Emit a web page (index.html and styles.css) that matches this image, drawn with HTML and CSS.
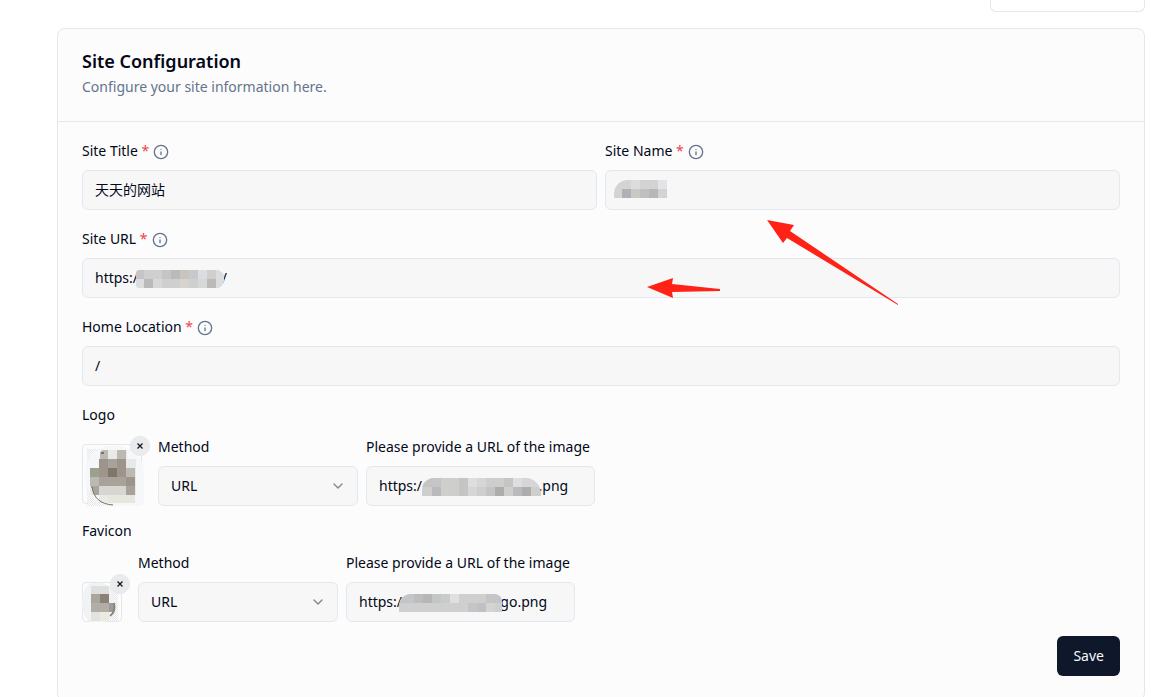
FILE: index.html
```html
<!doctype html>
<html lang="en">
<head>
  <meta charset="utf-8">
  <title>Site Configuration</title>
  <link rel="stylesheet" href="styles.css">
</head>

<body>
  <svg class="sprite" aria-hidden="true">
    <symbol id="info" viewBox="0 0 24 24">
      <circle cx="12" cy="12" r="10"/>
      <path d="M12 16v-4M12 8h.01"/>
    </symbol>
    <symbol id="cross" viewBox="0 0 24 24">
      <path d="M18 6 6 18M6 6l12 12"/>
    </symbol>
    <pattern id="checks" width="2" height="2" patternUnits="userSpaceOnUse">
      <rect width="2" height="2" fill="#fff"/>
      <path fill="#e4e4e4" d="M0 0h1v1H0zM1 1h1v1H1z"/>
    </pattern>
  </svg>

  <div class="toolbar">
    <div class="toolbar-box"></div>
  </div>

  <main class="card">
    <header class="card-header">
      <h1>Site Configuration</h1>
      <p>Configure your site information here.</p>
    </header>

    <form class="card-body">
      <!-- Title and name -->
      <div class="columns">
        <div class="field">
          <div class="label">
            <label for="siteTitle">Site Title <span class="required">*</span></label>
            <svg class="info"><use href="#info"/></svg>
          </div>
          <input type="text" id="siteTitle" value="天天的网站">
        </div>
        <div class="field">
          <div class="label">
            <label for="siteName">Site Name <span class="required">*</span></label>
            <svg class="info"><use href="#info"/></svg>
          </div>
          <input type="text" id="siteName" value="">
          <svg class="mask mask-name" width="53" height="18" shape-rendering="crispEdges">
            <path fill="#d4d4d4" d="M0 0h17v9H0zM0 9h8v9H0z"/>
            <path fill="#dcdcdd" d="M17 0h9v9h-9z"/>
            <path fill="#d3d2d4" d="M26 0h18v9H26z"/>
            <path fill="#e3e4e6" d="M44 0h9v9h-9z"/>
            <path fill="#b0b1b4" d="M8 9h9v9H8z"/>
            <path fill="#c9c9c4" d="M17 9h9v9h-9z"/>
            <path fill="#c0c0c1" d="M26 9h9v9h-9z"/>
            <path fill="#b9b7b5" d="M35 9h9v9h-9z"/>
            <path fill="#d0d4d7" d="M44 9h9v9h-9z"/>
          </svg>
          <svg class="arrow arrow-name" width="132" height="86" viewBox="0 0 132 86">
            <path d="M0 0l27 5-4 6 108 73v1L20 18l-4 5z"/>
          </svg>
        </div>
      </div>

      <div class="field">
        <div class="label">
          <label for="siteUrl">Site URL <span class="required">*</span></label>
          <svg class="info"><use href="#info"/></svg>
        </div>
        <input type="text" id="siteUrl" value="https:/                       /">
        <svg class="mask mask-site" width="88" height="18" shape-rendering="crispEdges">
          <path fill="#cfcfd0" d="M0 0h88v18H0z"/>
          <path fill="#c5c4c6" d="M0 0h8v9H0zM26 0h9v9h-9z"/>
          <path fill="#bababa" d="M35 0h9v9h-9zM8 9h9v9H8z"/>
          <path fill="#c9c4bf" d="M44 0h9v9h-9z"/>
          <path fill="#c6cacd" d="M53 0h9v9h-9z"/>
          <path fill="#dcdddf" d="M62 0h9v9h-9zM0 9h8v9H0zM80 0h8v18h-8z"/>
          <path fill="#d7d9d8" d="M17 9h9v9h-9zM62 9h9v9h-9z"/>
          <path fill="#d8d3cf" d="M44 9h9v9h-9z"/>
          <path fill="#bdb9b6" d="M71 9h9v9h-9z"/>
        </svg>
        <svg class="arrow arrow-url" width="74" height="20" viewBox="0 0 74 20">
          <path d="M0 9l26-9-1 6 48 5v2l-48 1 1 6z"/>
        </svg>
      </div>

      <div class="field">
        <div class="label">
          <label for="homeLocation">Home Location <span class="required">*</span></label>
          <svg class="info"><use href="#info"/></svg>
        </div>
        <input type="text" id="homeLocation" value="/">
      </div>

      <!-- Logo -->
      <section class="image-setting">
        <h2>Logo</h2>
        <div class="image-row">
          <div class="thumb thumb-logo">
            <svg width="60" height="60" viewBox="0 0 60 60" shape-rendering="crispEdges">
              <path fill="url(#checks)" d="M4 4h50v57H4z"/>
              <path fill="#f6f7f8" shape-rendering="auto" d="M30 1c20 0 32 13 31 30v25q0 5-6 5H32C12 61 2 46 2 30 2 12 13 1 30 1z"/>
              <path fill="#e9e9e8" d="M17 5h27v9h9v36h-9v8H16V50H7V23h9z"/>
              <path fill="#bcb8b4" d="M19 5h6v9h-8V8zM34 5h9v9h-9zM43 23h9v9h-9zM7 32h9v9H7z"/>
              <path fill="#9d958c" d="M16 14h9v9h-9zM34 14h9v18h-9zM43 32h9v9h-9zM16 23h9v9h-9z"/>
              <path fill="#a9a29a" d="M25 14h9v9h-9zM16 32h27v9H16zM43 41h9v9h-9z"/>
              <path fill="#80776a" d="M25 23h9v9h-9z"/>
              <path fill="#9ba18e" d="M7 23h9v9H7z"/>
              <path fill="#d6d6d2" d="M16 41h27v9H16z"/>
              <path fill="#e7e7df" d="M25 50h27v8H25z"/>
              <path fill="#aaa49b" d="M8 41h8v9h-5z"/>
              <path fill="none" stroke="#77736d" shape-rendering="auto" d="M9 42c2 11 8 17 21 18"/>
              <path fill="#77736d" d="M18 7h3v2h-3z"/>
            </svg>
            <button type="button" class="remove" aria-label="Remove logo"><svg><use href="#cross"/></svg></button>
          </div>
          <div class="field method">
            <label class="label" for="logoMethod">Method</label>
            <select id="logoMethod">
              <option>URL</option>
            </select>
            <svg class="chevron" viewBox="0 0 24 24"><path d="m6 9 6 6 6-6"/></svg>
          </div>
          <div class="field url">
            <label class="label" for="logoUrl">Please provide a URL of the image</label>
            <input type="text" id="logoUrl" value="https:/                                .png">
            <svg class="mask mask-logo" width="119" height="18" shape-rendering="crispEdges">
              <path fill="#cececd" d="M0 0h119v18H0z"/>
              <path fill="#c5c5c6" d="M0 0h19v9H0zM37 0h9v18h-9zM82 0h9v9h-9z"/>
              <path fill="#b9b9be" d="M10 9h9v9h-9zM91 9h9v9h-9z"/>
              <path fill="#dddee0" d="M46 0h9v9h-9zM91 0h9v9h-9z"/>
              <path fill="#d6d6d7" d="M55 0h9v9h-9zM46 9h9v9h-9zM100 0h19v9h-19z"/>
              <path fill="#c3c4c4" d="M64 9h9v9h-9z"/>
              <path fill="#adadae" d="M73 9h9v9h-9zM100 9h9v9h-9z"/>
            </svg>
          </div>
        </div>
      </section>

      <!-- Favicon -->
      <section class="image-setting">
        <h2>Favicon</h2>
        <div class="image-row">
          <div class="thumb thumb-favicon">
            <svg width="40" height="40" viewBox="0 0 40 40" shape-rendering="crispEdges">
              <path fill="url(#checks)" d="M20 3h15v35H20z"/>
              <path fill="#f1f2f3" shape-rendering="auto" d="M8 0h12c8 3 12 12 12 20 0 10-5 16-10 19H8q-9-4-9-20Q-1 5 8 0z"/>
              <path fill="#dfdfdd" d="M8 3h18v8H8z"/>
              <path fill="#aaa59d" d="M8 11h9v9H8z"/>
              <path fill="#8b8277" d="M17 11h9v9h-9z"/>
              <path fill="#b2aea7" d="M8 20h18v9H8z"/>
              <path fill="#a09a92" d="M26 20h5v9h-5z"/>
              <path fill="#e2e3de" d="M8 29h9v9H8z"/>
              <path fill="#eaeae1" d="M17 29h9v9h-9z"/>
              <path fill="none" stroke="#8a857d" stroke-width="2" shape-rendering="auto" d="M31 20q2 9-4 13"/>
            </svg>
            <button type="button" class="remove" aria-label="Remove favicon"><svg><use href="#cross"/></svg></button>
          </div>
          <div class="field method">
            <label class="label" for="faviconMethod">Method</label>
            <select id="faviconMethod">
              <option>URL</option>
            </select>
            <svg class="chevron" viewBox="0 0 24 24"><path d="m6 9 6 6 6-6"/></svg>
          </div>
          <div class="field url">
            <label class="label" for="faviconUrl">Please provide a URL of the image</label>
            <input type="text" id="faviconUrl" value="https:/                           go.png">
            <svg class="mask mask-favicon" width="103" height="18" shape-rendering="crispEdges">
              <path fill="#cfcfcf" d="M0 0h103v18H0z"/>
              <path fill="#c4c5c7" d="M0 0h15v9H0zM33 0h9v9h-9zM87 0h16v9H87zM69 9h9v9h-9z"/>
              <path fill="#bbbebd" d="M15 0h9v9h-9z"/>
              <path fill="#b8b5b7" d="M24 0h9v9h-9z"/>
              <path fill="#c7cbc9" d="M42 0h9v9h-9z"/>
              <path fill="#e0e0e1" d="M51 0h9v9h-9z"/>
              <path fill="#c0c1c5" d="M78 9h9v9h-9z"/>
              <path fill="#d6d4d1" d="M87 9h9v9h-9z"/>
            </svg>
          </div>
        </div>
      </section>

      <div class="actions">
        <button type="submit" class="save">Save</button>
      </div>
    </form>
  </main>
</body>
</html>
```
FILE: styles.css
```css
* {
  box-sizing: border-box;
}

body {
  margin: 0;
  padding: 0 6px 0 57px;
  background: #fff;
  color: #020817;
  font-family: "Noto Sans", "Noto Sans CJK SC", sans-serif;
  font-size: 14px;
  line-height: 20px;
}

h1, h2, p {
  margin: 0;
}

svg {
  display: block;
}

.sprite {
  position: absolute;
  width: 0;
  height: 0;
}

.toolbar {
  display: flex;
  justify-content: flex-end;
  margin-bottom: 16px;
}

.toolbar-box {
  width: 155px;
  height: 12px;
  border: 1px solid #e2e8f0;
  border-top: none;
  border-radius: 0 0 6px 6px;
}

.card {
  border: 1px solid #e2e8f0;
  border-radius: 8px;
  background: #fcfcfc;
}

.card-header {
  padding: 20px 24px 24px;
  border-bottom: 1px solid #e2e8f0;
}

.card-header h1 {
  font-size: 18px;
  line-height: 24px;
  font-weight: 600;
}

.card-header p {
  margin-top: 4px;
  color: #64748b;
}

.card-body {
  display: flex;
  flex-direction: column;
  gap: 16px;
  padding: 16px 24px 24px;
}

.columns {
  display: grid;
  grid-template-columns: 1fr 1fr;
  gap: 8px;
}

.field {
  position: relative;
}

.label {
  display: flex;
  align-items: center;
  gap: 4px;
  height: 26px;
  margin-bottom: 6px;
  white-space: nowrap;
}

.required {
  color: #ef4444;
}

.info {
  width: 16px;
  height: 16px;
  margin-top: 2px;
  fill: none;
  stroke: #64748b;
  stroke-width: 2;
  stroke-linecap: round;
}

input, select {
  display: block;
  width: 100%;
  height: 40px;
  padding: 0 12px;
  border: 1px solid #e2e8f0;
  border-radius: 6px;
  background: #f7f7f7;
  color: inherit;
  font: inherit;
  appearance: none;
}

input {
  padding-bottom: 2px;
}

.image-setting h2 {
  font-size: 14px;
  line-height: 26px;
  font-weight: 400;
}

.image-row {
  display: flex;
  align-items: flex-end;
  gap: 8px;
  margin-top: 6px;
}

.image-setting + .image-setting {
  margin-top: -4px;
}

.method {
  width: 200px;
}

.url {
  width: 229px;
}

.thumb {
  position: relative;
  margin-right: 8px;
  border: 1px solid #e2e8f0;
  border-radius: 4px;
}

.thumb > svg {
  position: absolute;
  inset: 0;
  overflow: visible;
}

.thumb-logo {
  width: 60px;
  height: 60px;
  margin-bottom: 2px;
}

.thumb-favicon {
  width: 40px;
  height: 40px;
}

.remove {
  position: absolute;
  top: -9px;
  right: -9px;
  display: flex;
  align-items: center;
  justify-content: center;
  width: 20px;
  height: 20px;
  padding: 0;
  border: 1px solid #e2e8f0;
  border-radius: 50%;
  background: #ebebec;
  cursor: pointer;
}

.remove svg {
  width: 10px;
  height: 10px;
  fill: none;
  stroke: #0f172a;
  stroke-width: 3;
}

.chevron {
  position: absolute;
  right: 12px;
  bottom: 12px;
  width: 16px;
  height: 16px;
  fill: none;
  stroke: #858585;
  stroke-width: 2;
  stroke-linecap: round;
  stroke-linejoin: round;
  pointer-events: none;
}

/* Mosaic over private values */
.mask {
  position: absolute;
  bottom: 10px;
}

.mask-name {
  bottom: 12px;
  left: 9px;
  border-radius: 14px 0 0 0;
}

.mask-site {
  left: 54px;
  border-radius: 4px 8px 8px 4px;
}

.mask-logo {
  left: 56px;
  border-radius: 12px 16px 0 0;
}

.mask-favicon {
  left: 53px;
  border-radius: 12px 8px 0 0;
}

/* Pointer arrows */
.arrow {
  position: absolute;
  z-index: 1;
  fill: #ff2216;
  pointer-events: none;
}

.arrow-name {
  top: 82px;
  left: 162px;
}

.arrow-url {
  top: 52px;
  left: 565px;
}

.actions {
  display: flex;
  justify-content: flex-end;
  margin-top: -2px;
}

.save {
  height: 40px;
  padding: 0 16px;
  border: none;
  border-radius: 6px;
  background: #0f172a;
  color: #f8fafc;
  font: inherit;
  cursor: pointer;
}
```
